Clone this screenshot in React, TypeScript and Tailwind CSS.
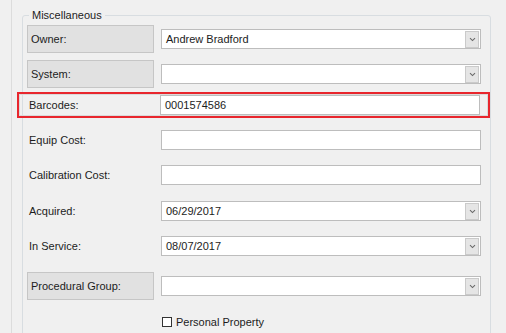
import React from "react";

function Chevron() {
  return (
    <div className="mr-[1px] flex h-[17px] w-[14px] items-center justify-center border border-[#cacaca] bg-[#e5e5e5]">
      <svg width="7" height="5" viewBox="0 0 7 5">
        <path d="M1 1.2 L3.5 3.6 L6 1.2" fill="none" stroke="#6a6a6a" strokeWidth="1.1" />
      </svg>
    </div>
  );
}

function Combo({ value }: { value?: string }) {
  return (
    <div className="flex h-[20px] w-[320px] items-center border border-[#bdbdbd] bg-white">
      <div className="flex-1 pl-[4px] leading-[18px]">{value}</div>
      <Chevron />
    </div>
  );
}

function TextBox({ value }: { value?: string }) {
  return (
    <div className="flex h-[20px] w-[320px] items-center border border-[#bdbdbd] bg-white pl-[4px] leading-[18px]">
      {value}
    </div>
  );
}

function BoxLabel({ text }: { text: string }) {
  return (
    <div className="flex h-[28px] w-[127px] items-center border border-[#c6c6c6] bg-[#e1e1e1] pl-[3px]">
      {text}
    </div>
  );
}

function PlainLabel({ text }: { text: string }) {
  return <div className="w-[127px] pl-[2px]">{text}</div>;
}

export default function App() {
  return (
    <div className="h-[333px] w-[506px] overflow-hidden bg-[#f0f0f0] font-['Liberation_Sans',Arial,sans-serif] text-[11px] text-[#1c1c1c]">
      <div className="ml-[11px] h-full border-l border-[#dcdcdc] pl-[10px] pt-[7px]">
        <fieldset className="h-[400px] w-[463px] rounded-[3px] border border-[#d8dde1] pl-[4px]">
          <legend className="ml-[2px] px-[3px] leading-[16px]">Miscellaneous</legend>
          <div className="flex flex-col">
            <div className="mt-[2px] flex items-center gap-[7px]">
              <BoxLabel text="Owner:" />
              <Combo value="Andrew Bradford" />
            </div>
            <div className="mt-[7px] flex items-center gap-[7px]">
              <BoxLabel text="System:" />
              <Combo />
            </div>
            <div className="-ml-[10px] mt-[4px] h-[26px] w-[473px] border-2 border-[#e8262d]">
              <div className="flex h-full items-center border border-[#dadada] pl-[9px]">
                <div className="w-[131px]">Barcodes:</div>
                <TextBox value="0001574586" />
              </div>
            </div>
            <div className="mt-[12px] flex items-center gap-[7px]">
              <PlainLabel text="Equip Cost:" />
              <TextBox />
            </div>
            <div className="mt-[15px] flex items-center gap-[7px]">
              <PlainLabel text="Calibration Cost:" />
              <TextBox />
            </div>
            <div className="mt-[16px] flex items-center gap-[7px]">
              <PlainLabel text="Acquired:" />
              <Combo value="06/29/2017" />
            </div>
            <div className="mt-[15px] flex items-center gap-[7px]">
              <PlainLabel text="In Service:" />
              <Combo value="08/07/2017" />
            </div>
            <div className="mt-[16px] flex items-center gap-[7px]">
              <BoxLabel text="Procedural Group:" />
              <Combo />
            </div>
            <div className="ml-[135px] mt-[14px] flex h-[16px] items-center">
              <div className="h-[10px] w-[10px] border border-[#333333] bg-white" />
              <span className="ml-[4px]">Personal Property</span>
            </div>
          </div>
        </fieldset>
      </div>
    </div>
  );
}
